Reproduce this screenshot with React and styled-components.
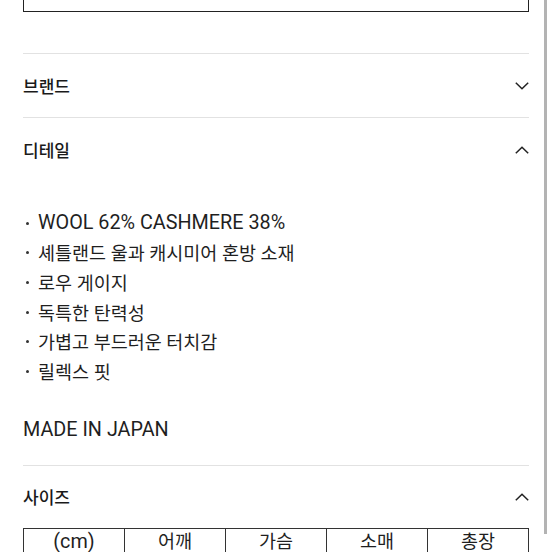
import React from 'react'
import styled, { createGlobalStyle } from 'styled-components'

const GlobalStyle = createGlobalStyle`
    html, body {
        margin: 0;
        padding: 0;
        background: #ffffff;
        overflow: hidden;
    }
    body {
        font-family: Roboto, "Noto Sans CJK KR", "Noto Sans", sans-serif;
        color: #1f1f1f;
    }
`

const Page = styled.div`
    padding: 0 23px;
    height: 552px;
    overflow: hidden;
`

const TopBox = styled.div`
    height: 11px;
    border: 1.5px solid #222;
    border-top: none;
    margin-bottom: 41px;
`

const Section = styled.section`
    border-top: 1px solid #e2e2e2;
`

const Header = styled.div`
    height: ${(p) => (p.$tight ? '62px' : '63px')};
    display: flex;
    align-items: center;
    justify-content: space-between;
    h3 {
        margin: 0;
        font-size: 17px;
        font-weight: 500;
        color: #1a1a1a;
    }
`

const Chevron = ({ up }) => (
    <svg width="14" height="8" viewBox="0 0 14 8" fill="none">
        <path
            d={up ? 'M0.8 7.3 L7 1.2 L13.2 7.3' : 'M0.8 0.7 L7 6.8 L13.2 0.7'}
            stroke="#222"
            strokeWidth="1.5"
        />
    </svg>
)

const Detail = styled.div`
    padding: 27px 0 20px;
    color: #1f1f1f;
`

const List = styled.ul`
    list-style: none;
    margin: 0;
    padding: 0;
`

const Item = styled.li`
    display: flex;
    align-items: center;
    height: 29.6px;
    font-size: ${(p) => (p.$latin ? '19.8px' : '18.5px')};
    white-space: nowrap;
    &::before {
        content: '';
        width: 3px;
        height: 3px;
        border-radius: 50%;
        background: #333;
        margin: 1px 9px 0 3px;
        flex: none;
    }
`

const Origin = styled.p`
    margin: 29.6px 0 0;
    height: 29.6px;
    line-height: 29.6px;
    font-size: 19.8px;
`

const Table = styled.table`
    width: 100%;
    border-collapse: collapse;
    table-layout: fixed;
`

const Cell = styled.th`
    border: 1.5px solid #333;
    font-size: ${(p) => (p.$latin ? '19.8px' : '18.5px')};
    font-weight: 400;
    height: 34px;
    line-height: 26px;
    vertical-align: top;
    padding: 0;
    color: #1f1f1f;
`

const Scrollbar = styled.div`
    position: fixed;
    top: 0;
    right: 5px;
    width: 3px;
    height: 534px;
    background: #b3b3b3;
`

const details = [
    { text: 'WOOL 62% CASHMERE 38%', latin: true },
    { text: '셰틀랜드 울과 캐시미어 혼방 소재' },
    { text: '로우 게이지' },
    { text: '독특한 탄력성' },
    { text: '가볍고 부드러운 터치감' },
    { text: '릴렉스 핏' },
]

const sizeCols = ['(cm)', '어깨', '가슴', '소매', '총장']

const App = () => {
    return (
        <>
            <GlobalStyle />
            <Page>
                <TopBox />
                <Section>
                    <Header>
                        <h3>브랜드</h3>
                        <Chevron />
                    </Header>
                </Section>
                <Section>
                    <Header>
                        <h3>디테일</h3>
                        <Chevron up />
                    </Header>
                    <Detail>
                        <List>
                            {details.map((d) => (
                                <Item key={d.text} $latin={d.latin}>
                                    {d.text}
                                </Item>
                            ))}
                        </List>
                        <Origin>MADE IN JAPAN</Origin>
                    </Detail>
                </Section>
                <Section>
                    <Header $tight>
                        <h3>사이즈</h3>
                        <Chevron up />
                    </Header>
                    <Table>
                        <thead>
                            <tr>
                                {sizeCols.map((c) => (
                                    <Cell key={c} $latin={c === '(cm)'}>
                                        {c}
                                    </Cell>
                                ))}
                            </tr>
                        </thead>
                    </Table>
                </Section>
            </Page>
            <Scrollbar />
        </>
    )
}

export default App
